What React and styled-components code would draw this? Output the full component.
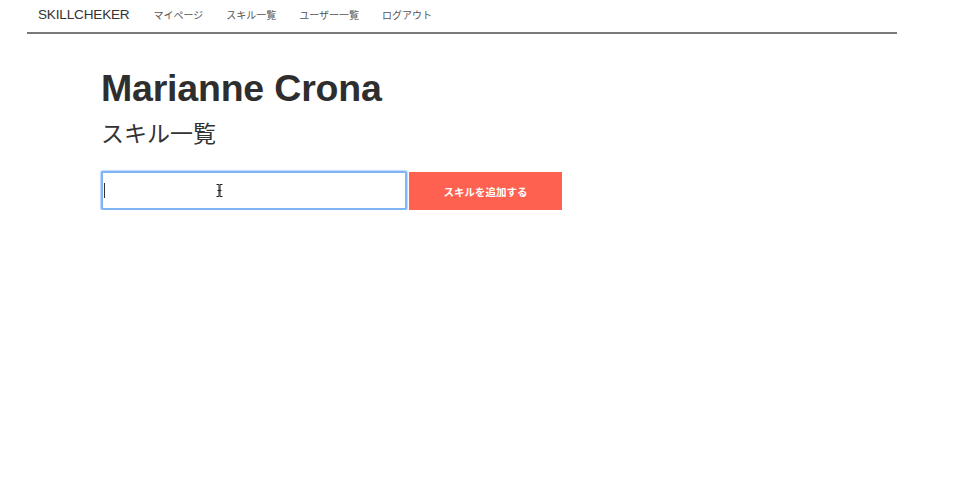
import React from 'react';
import styled, { createGlobalStyle } from 'styled-components';

const GlobalStyle = createGlobalStyle`
  body {
    margin: 0;
    background: #fff;
    font-family: "Liberation Sans", Arial, "Noto Sans CJK JP", sans-serif;
    color: #333;
  }
`;

const Page = styled.div`
  width: 870px;
  margin-left: 27px;
`;

const Nav = styled.nav`
  display: flex;
  align-items: center;
  gap: 23px;
  height: 28px;
  padding: 0 0 4px 11px;
  border-bottom: 2px solid #7a7a7a;
`;

const Brand = styled.a`
  font-size: 13.6px;
  color: #333;
  letter-spacing: -0.2px;
  margin-right: 1px;
`;

const NavLink = styled.a`
  font-size: 10px;
  color: #555;
`;

const Main = styled.main`
  padding: 31px 0 0 74px;
`;

const Name = styled.h1`
  margin: 0;
  font-size: 37.5px;
  font-weight: 700;
  line-height: 46px;
  color: #2e2e2e;
  letter-spacing: -0.2px;
`;

const Sub = styled.h2`
  margin: 8px 0 0;
  font-size: 23px;
  font-weight: 400;
  line-height: 30px;
  color: #333;
`;

const Form = styled.form`
  display: flex;
  align-items: flex-start;
  gap: 2px;
  margin-top: 22px;
`;

const Field = styled.div`
  position: relative;
  width: 306px;
  height: 39px;
`;

const Input = styled.input`
  box-sizing: border-box;
  width: 100%;
  height: 100%;
  border: 2px solid #80b4f4;
  border-radius: 2px;
  box-shadow: 0 0 1px 1px #bcd7fb;
  outline: none;
  padding: 0 4px;
  font-size: 14px;
`;

const Caret = styled.span`
  position: absolute;
  left: 3px;
  top: 12px;
  width: 1px;
  height: 15px;
  background: #333;
`;

const Pointer = styled.svg`
  position: absolute;
  left: 115px;
  top: 13px;
`;

const AddButton = styled.button`
  width: 153px;
  height: 38px;
  margin-top: 1px;
  border: none;
  border-radius: 0;
  background: #ff6150;
  color: #fff;
  font-size: 10.5px;
  font-weight: 700;
  font-family: "Liberation Sans", Arial, "Noto Sans CJK JP", sans-serif;
`;

export default function App() {
  return (
    <Page>
      <GlobalStyle />
      <Nav>
        <Brand>SKILLCHEKER</Brand>
        <NavLink>マイページ</NavLink>
        <NavLink>スキル一覧</NavLink>
        <NavLink>ユーザー一覧</NavLink>
        <NavLink>ログアウト</NavLink>
      </Nav>
      <Main>
        <Name>Marianne Crona</Name>
        <Sub>スキル一覧</Sub>
        <Form onSubmit={e => e.preventDefault()}>
          <Field>
            <Input type="text" />
            <Caret />
            <Pointer width="7" height="13" viewBox="0 0 7 13">
              <path d="M0.5 0.5h2.5v12h-2.5M6.5 0.5h-2.5v12h2.5M1.5 6.5h4" stroke="#222" strokeWidth="1" fill="none" />
            </Pointer>
          </Field>
          <AddButton type="submit">スキルを追加する</AddButton>
        </Form>
      </Main>
    </Page>
  );
}
